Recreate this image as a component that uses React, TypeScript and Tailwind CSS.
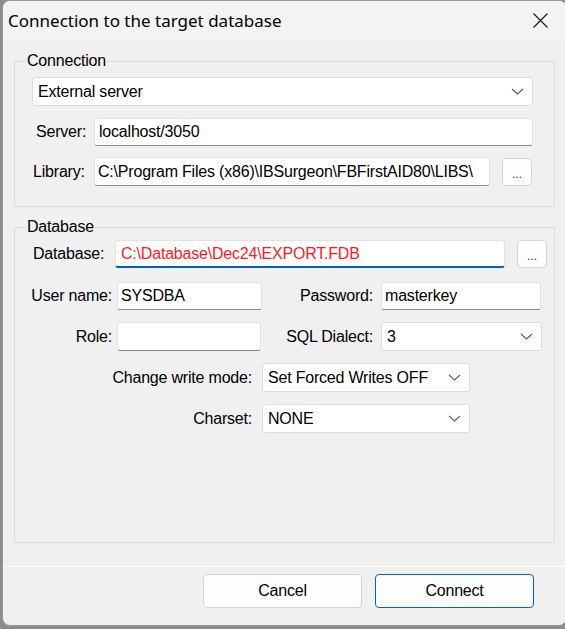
import React from 'react';

const Chevron = () => (
  <svg width="13" height="7" viewBox="0 0 13 7" className="shrink-0">
    <path d="M1 1 L6.5 6 L12 1" fill="none" stroke="#5f5f5f" strokeWidth="1.1" />
  </svg>
);

const Label: React.FC<{ text: string; className?: string }> = ({ text, className = '' }) => (
  <span className={`shrink-0 flex justify-end whitespace-nowrap ${className}`}>{text}</span>
);

const TextBox: React.FC<{ value: string; className?: string; red?: boolean; focused?: boolean }> = ({
  value,
  className = '',
  red,
  focused,
}) => (
  <div
    className={`h-[28px] shrink-0 bg-white rounded-[3px] border border-[#e3e3e3] ${
      focused ? 'border-b-2 border-b-[#005fb8]' : 'border-b-[#8a8a8a]'
    } flex items-center pl-[3px] overflow-hidden whitespace-nowrap ${red ? 'text-[#ff1a1a]' : 'text-black'} ${className}`}
  >
    {value}
  </div>
);

const Combo: React.FC<{ value: string; className?: string }> = ({ value, className = '' }) => (
  <div
    className={`h-[29px] shrink-0 bg-white rounded-[3px] border border-[#dcdcdc] flex items-center justify-between pl-[5px] pr-[8px] ${className}`}
  >
    <span className="whitespace-nowrap">{value}</span>
    <Chevron />
  </div>
);

const Browse = () => (
  <div className="w-[30px] h-[28px] bg-[#fdfdfd] rounded-[4px] border border-[#d6d6d6] flex items-end justify-center pb-[5px] text-[12px] leading-none tracking-normal text-[#333]">
    ...
  </div>
);

const Group: React.FC<{ title: string; className?: string; children: React.ReactNode }> = ({
  title,
  className = '',
  children,
}) => (
  <fieldset className={`border border-[#dcdcdc] mx-[11px] p-0 ${className}`}>
    <legend className="ml-[11px] px-[1px] leading-[16px]">{title}</legend>
    {children}
  </fieldset>
);

export default function App() {
  return (
    <div className="w-[565px] h-[629px] overflow-hidden bg-[#8c8c8c] font-['Liberation_Sans',Arial,sans-serif] text-[16px] tracking-[-0.2px] text-black">
      <div className="ml-[2px] w-[565px] h-[626px] rounded-[8px] overflow-hidden border border-[#9a9a9a] flex flex-col bg-[#f0f0f0]">
        <div className="h-[39px] shrink-0 bg-[#f3f3f3] flex items-center justify-between pl-[5px] pr-[18px]">
          <span className="font-['Noto_Sans',sans-serif] text-[17px] tracking-normal text-black">
            Connection to the target database
          </span>
          <svg width="15" height="15" viewBox="0 0 15 15">
            <path d="M0.5 0.5 L14.5 14.5 M14.5 0.5 L0.5 14.5" stroke="#1a1a1a" strokeWidth="1.2" />
          </svg>
        </div>

        <div className="flex-1 flex flex-col pt-[13px]">
          <Group title="Connection" className="h-[154px]">
            <div className="pl-[17px] pr-[21px] pt-[8px] flex flex-col">
              <Combo value="External server" />
              <div className="flex items-center mt-[12px]">
                <span className="w-[62px] shrink-0 pl-[4px]">Server:</span>
                <TextBox value="localhost/3050" className="flex-1 pl-[4px]" />
              </div>
              <div className="flex items-center mt-[11px]">
                <span className="w-[62px] shrink-0 pl-[1px]">Library:</span>
                <TextBox
                  value="C:\Program Files (x86)\IBSurgeon\FBFirstAID80\LIBS\"
                  className="w-[396px] h-[29px]"
                />
                <div className="ml-[12px]">
                  <Browse />
                </div>
              </div>
            </div>
          </Group>

          <Group title="Database" className="h-[324px] mt-[12px]">
            <div className="pl-[17px] pr-[7px] pt-[5px] flex flex-col">
              <div className="flex items-center">
                <span className="w-[83px] shrink-0 pl-[1px]">Database:</span>
                <TextBox value="C:\Database\Dec24\EXPORT.FDB" red focused className="w-[390px] pl-[5px]" />
                <div className="ml-[12px]">
                  <Browse />
                </div>
              </div>
              <div className="flex items-center mt-[14px]">
                <Label text="User name:" className="w-[80px]" />
                <TextBox value="SYSDBA" className="w-[145px] ml-[5px]" />
                <Label text="Password:" className="w-[111px]" />
                <TextBox value="masterkey" className="w-[160px] ml-[8px]" />
              </div>
              <div className="flex items-center mt-[12px]">
                <Label text="Role:" className="w-[80px]" />
                <TextBox value="" className="w-[144px] ml-[5px] h-[29px]" />
                <Label text="SQL Dialect:" className="w-[112px]" />
                <Combo value="3" className="w-[161px] ml-[8px]" />
              </div>
              <div className="flex items-center mt-[12px]">
                <Label text="Change write mode:" className="w-[220px]" />
                <Combo value="Set Forced Writes OFF" className="w-[208px] ml-[10px] h-[28px]" />
              </div>
              <div className="flex items-center mt-[12px]">
                <Label text="Charset:" className="w-[220px]" />
                <Combo value="NONE" className="w-[208px] ml-[10px] border-[#8f8f8f]" />
              </div>
            </div>
          </Group>

          <div className="flex-1" />
          <div className="h-[59px] shrink-0 border-t border-white flex items-start justify-end pt-[7px] pr-[32px] gap-[13px]">
            <button className="w-[159px] h-[34px] bg-[#fdfdfd] rounded-[4px] border border-[#d4d4d4] text-black">
              Cancel
            </button>
            <button className="w-[159px] h-[34px] bg-[#fdfdfd] rounded-[4px] border-[1.5px] border-[#0067c0] text-black">
              Connect
            </button>
          </div>
        </div>
      </div>
    </div>
  );
}
